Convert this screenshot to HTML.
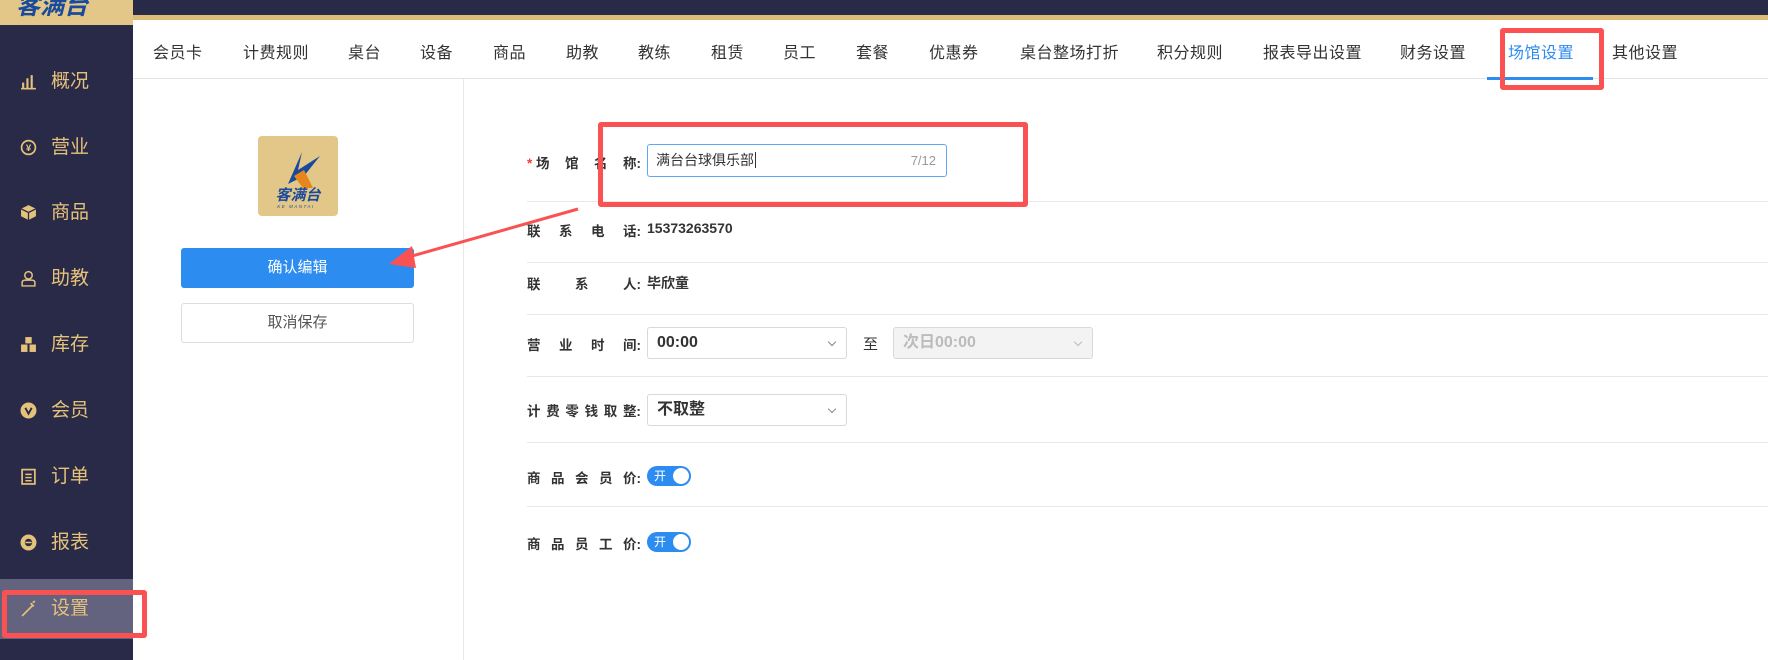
<!DOCTYPE html>
<html><head><meta charset="utf-8"><style>
*{margin:0;padding:0;box-sizing:border-box}
body{width:1768px;height:660px;overflow:hidden;background:#fff;font-family:"Liberation Sans","Noto Sans CJK SC",sans-serif;position:relative}
.a{position:absolute}
.side{left:0;top:0;width:133px;height:660px;background:#292a48}
.si{left:0;width:133px;height:40px;line-height:40px;color:#e5c27a;font-size:19px}
.si span.t{position:absolute;left:51px}
.si .ic{position:absolute;left:20px;top:11px;width:17px;height:17px}
.tab{top:39px;font-size:16px;color:#333;letter-spacing:0.5px}
.lbl{left:527px;width:114px;font-size:13.5px;font-weight:bold;color:#333;display:flex;justify-content:space-between}
.val{left:647px;font-size:14px;font-weight:bold;color:#333}
.line{left:527px;right:0;height:1px;background:#e8e8e8}
.sel{border:1px solid #d9d9d9;border-radius:3px;height:32px;background:#fff;font-size:16px;font-weight:bold;color:#333;line-height:30px;padding-left:9px}
.chev{position:absolute;right:11px;top:11px;width:6px;height:6px;border-right:1px solid #888;border-bottom:1px solid #888;transform:rotate(45deg)}
.sw{width:44px;height:20px;border-radius:10px;background:#2d8cf0;color:#fff;font-size:12px;line-height:20px;padding-left:7px}
.sw i{position:absolute;right:2px;top:2px;width:16px;height:16px;border-radius:50%;background:#fff}
</style></head><body>
<div class="a" style="left:0;top:0;width:1768px;height:15px;background:#292a48"></div>
<div class="a" style="left:0;top:15px;width:1768px;height:5px;background:#dfbb78"></div>
<div class="a side"></div>
<div class="a" style="left:0;top:0;width:133px;height:25px;background:#e3c788;overflow:hidden"><div class="a" style="left:16px;top:-14px;font-size:24px;font-weight:bold;font-style:italic;color:#1a4a9c">客满台</div></div>
<div class="a" style="left:0;top:579px;width:133px;height:60px;background:#64637f"></div>

<div class="a si" style="top:62px"><svg class="ic" viewBox="0 0 16 16"><rect x="2" y="9" width="2" height="6" fill="#e5c27a"/><rect x="6" y="5" width="2" height="10" fill="#e5c27a"/><rect x="10" y="2" width="2" height="13" fill="#e5c27a"/><rect x="1" y="14" width="14" height="1.5" fill="#e5c27a"/></svg><span class="t">概况</span></div>
<div class="a si" style="top:128px"><svg class="ic" viewBox="0 0 16 16"><circle cx="8" cy="8" r="6.5" fill="none" stroke="#e5c27a" stroke-width="1.6"/><text x="8" y="11.5" font-size="9" text-anchor="middle" fill="#e5c27a" font-weight="bold">¥</text></svg><span class="t">营业</span></div>
<div class="a si" style="top:193px"><svg class="ic" viewBox="0 0 16 16"><path d="M8 1L15 4.5V11.5L8 15L1 11.5V4.5Z" fill="#e5c27a"/><path d="M1 4.5L8 8L15 4.5M8 8V15" stroke="#292a48" stroke-width="1.2" fill="none"/></svg><span class="t">商品</span></div>
<div class="a si" style="top:259px"><svg class="ic" viewBox="0 0 16 16"><circle cx="8" cy="5" r="3.5" fill="none" stroke="#e5c27a" stroke-width="1.4"/><path d="M2 15V12Q2 9.5 5 9.5H11Q14 9.5 14 12V15Z" fill="none" stroke="#e5c27a" stroke-width="1.4"/></svg><span class="t">助教</span></div>
<div class="a si" style="top:325px"><svg class="ic" viewBox="0 0 16 16"><rect x="5" y="1" width="6" height="6" fill="#e5c27a"/><rect x="1" y="8" width="6" height="7" fill="#e5c27a"/><rect x="9" y="8" width="6" height="7" fill="#e5c27a"/></svg><span class="t">库存</span></div>
<div class="a si" style="top:391px"><svg class="ic" viewBox="0 0 16 16"><circle cx="8" cy="8" r="7.5" fill="#e5c27a"/><path d="M5 5.5L8 11L11 5.5" stroke="#292a48" stroke-width="1.8" fill="none"/></svg><span class="t">会员</span></div>
<div class="a si" style="top:457px"><svg class="ic" viewBox="0 0 16 16"><rect x="2" y="1.5" width="12" height="13.5" fill="none" stroke="#e5c27a" stroke-width="1.6"/><path d="M5 6H11M5 9H11M5 12H11" stroke="#e5c27a" stroke-width="1.4"/></svg><span class="t">订单</span></div>
<div class="a si" style="top:523px"><svg class="ic" viewBox="0 0 16 16"><circle cx="8" cy="8" r="7.5" fill="#e5c27a"/><circle cx="8" cy="8" r="3.5" fill="#292a48"/><rect x="5" y="7.3" width="6" height="1.4" fill="#e5c27a"/></svg><span class="t">报表</span></div>
<div class="a si" style="top:589px"><svg class="ic" viewBox="0 0 16 16"><path d="M2 15L12 5M10 3L13 6M12 2.5L14 1" stroke="#e5c27a" stroke-width="1.6" fill="none"/></svg><span class="t">设置</span></div>
<div class="a" style="left:2px;top:590px;width:145px;height:48px;border:5px solid #fa5252;border-radius:3px"></div>

<div class="a" style="left:133px;top:78px;width:1635px;height:1px;background:#e4e4e4"></div>
<div class="a tab" style="left:153px">会员卡</div>
<div class="a tab" style="left:243px">计费规则</div>
<div class="a tab" style="left:348px">桌台</div>
<div class="a tab" style="left:420px">设备</div>
<div class="a tab" style="left:493px">商品</div>
<div class="a tab" style="left:566px">助教</div>
<div class="a tab" style="left:638px">教练</div>
<div class="a tab" style="left:711px">租赁</div>
<div class="a tab" style="left:783px">员工</div>
<div class="a tab" style="left:856px">套餐</div>
<div class="a tab" style="left:929px">优惠券</div>
<div class="a tab" style="left:1020px">桌台整场打折</div>
<div class="a tab" style="left:1157px">积分规则</div>
<div class="a tab" style="left:1263px">报表导出设置</div>
<div class="a tab" style="left:1400px">财务设置</div>
<div class="a tab" style="left:1508px;color:#2d8cf0">场馆设置</div>
<div class="a tab" style="left:1612px">其他设置</div>
<div class="a" style="left:1487px;top:77px;width:106px;height:3px;background:#2d8cf0"></div>
<div class="a" style="left:1500px;top:28px;width:104px;height:62px;border:5px solid #fa5252;border-radius:3px"></div>

<div class="a" style="left:463px;top:79px;width:1px;height:581px;background:#e8e8e8"></div>
<div class="a" style="left:258px;top:136px;width:80px;height:80px;background:#e3c788;border-radius:4px;overflow:hidden">
<svg width="80" height="80" viewBox="0 0 80 80"><path d="M30 48L44 16L40 34L62 20L46 40Z" fill="#1a4a9c"/><path d="M36 40L46 34L55 52H45Z" fill="#e8861c"/><text x="40" y="64" font-size="15" font-weight="bold" font-style="italic" fill="#1a4a9c" text-anchor="middle">客满台</text><text x="38" y="72" font-size="4.5" fill="#1a4a9c" text-anchor="middle" letter-spacing="1.5" font-style="italic">KE MANTAI</text></svg></div>
<div class="a" style="left:181px;top:248px;width:233px;height:40px;background:#2d8cf0;border-radius:3px;color:#fff;text-align:center;line-height:40px;font-size:15px">确认编辑</div>
<div class="a" style="left:181px;top:303px;width:233px;height:40px;border:1px solid #ddd;border-radius:3px;color:#555;text-align:center;line-height:38px;font-size:15px">取消保存</div>

<div class="a lbl" style="top:152px"><span><span style="color:#f04134">* </span>场</span><span>馆</span><span>名</span><span>称:</span></div>
<div class="a" style="left:647px;top:144px;width:300px;height:33px;border:1px solid #5ea8f5;border-radius:3px;font-size:14px;color:#333;line-height:31px;padding-left:8px">满台台球俱乐部<span style="border-left:1px solid #333;margin-left:1px"></span><span style="position:absolute;right:10px;color:#999;font-size:13px">7/12</span></div>
<div class="a line" style="top:201px"></div>
<div class="a lbl" style="top:220px"><span>联</span><span>系</span><span>电</span><span>话:</span></div>
<div class="a val" style="top:220px">15373263570</div>
<div class="a line" style="top:262px"></div>
<div class="a lbl" style="top:273px"><span>联</span><span>系</span><span>人:</span></div>
<div class="a val" style="top:273px">毕欣童</div>
<div class="a line" style="top:314px"></div>
<div class="a lbl" style="top:334px"><span>营</span><span>业</span><span>时</span><span>间:</span></div>
<div class="a sel" style="left:647px;top:327px;width:200px">00:00<span class="chev"></span></div>
<div class="a" style="left:863px;top:333px;font-size:15px;color:#333">至</div>
<div class="a sel" style="left:893px;top:327px;width:200px;background:#f3f3f3;color:#bbb">次日00:00<span class="chev" style="border-color:#bbb"></span></div>
<div class="a line" style="top:376px"></div>
<div class="a lbl" style="top:400px"><span>计</span><span>费</span><span>零</span><span>钱</span><span>取</span><span>整:</span></div>
<div class="a sel" style="left:647px;top:394px;width:200px">不取整<span class="chev"></span></div>
<div class="a line" style="top:442px"></div>
<div class="a lbl" style="top:467px"><span>商</span><span>品</span><span>会</span><span>员</span><span>价:</span></div>
<div class="a sw" style="left:647px;top:466px">开<i></i></div>
<div class="a line" style="top:506px"></div>
<div class="a lbl" style="top:533px"><span>商</span><span>品</span><span>员</span><span>工</span><span>价:</span></div>
<div class="a sw" style="left:647px;top:532px">开<i></i></div>

<div class="a" style="left:598px;top:122px;width:430px;height:85px;border:5px solid #fa5252;border-radius:3px"></div>
<svg class="a" style="left:0;top:0" width="1768" height="660"><path d="M578 209L405 258" stroke="#fa5252" stroke-width="3"/><path d="M389 264L412 246L416 268Z" fill="#fa5252"/></svg>
</body></html>
